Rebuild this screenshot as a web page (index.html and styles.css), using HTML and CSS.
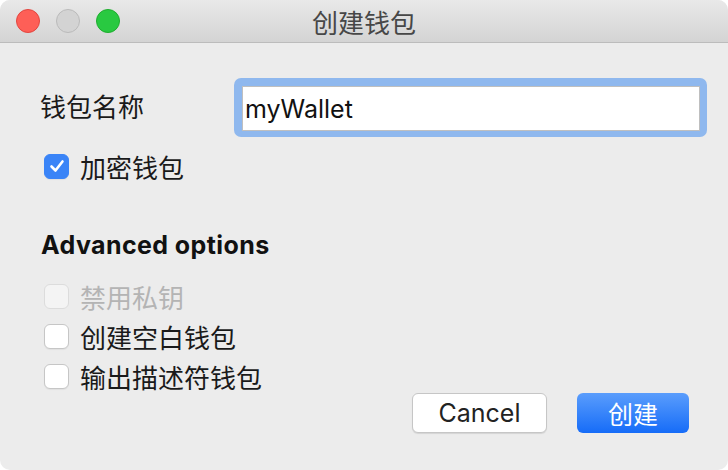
FILE: index.html
```html
<!DOCTYPE html>
<html lang="zh-CN">
<head>
  <meta charset="UTF-8">
  <title>创建钱包</title>
  <link rel="stylesheet" href="styles.css">
</head>
<body>
  <div class="window">
    <div class="titlebar">
      <div class="lights">
        <span class="light close"></span>
        <span class="light minimize"></span>
        <span class="light zoom"></span>
      </div>
      <div class="title">创建钱包</div>
      <div></div>
    </div>

    <div class="content">
      <div class="name-row">
        <label class="name-label" for="walletName">钱包名称</label>
        <div class="focus-ring">
          <input id="walletName" class="name-input" type="text" value="myWallet">
        </div>
      </div>

      <label class="check-row encrypt">
        <span class="box checked">
          <svg width="18" height="18" viewBox="0 0 18 18"><path d="M3.5 9.5 L7.5 13.5 L14.5 4.5" fill="none" stroke="#fff" stroke-width="2.6" stroke-linecap="round" stroke-linejoin="round"/></svg>
        </span>
        加密钱包
      </label>

      <h2 class="section">Advanced options</h2>

      <div class="options">
        <label class="check-row disabled"><span class="box"></span>禁用私钥</label>
        <label class="check-row"><span class="box"></span>创建空白钱包</label>
        <label class="check-row"><span class="box"></span>输出描述符钱包</label>
      </div>

      <div class="buttons">
        <button class="btn cancel">Cancel</button>
        <button class="btn primary">创建</button>
      </div>
    </div>
  </div>
</body>
</html>
```

FILE: styles.css
```css
html, body {
  margin: 0;
  background: #fff;
}
body {
  font-family: Inter, "Noto Sans CJK SC", sans-serif;
  color: #1a1a1a;
}
.window {
  width: 728px;
  height: 470px;
  border-radius: 10px;
  overflow: hidden;
  background: #ececec;
}
.titlebar {
  height: 42px;
  border-bottom: 1px solid #bcbcbc;
  background: linear-gradient(#e9e9e9, #d4d4d4);
  display: grid;
  grid-template-columns: 1fr auto 1fr;
  align-items: center;
}
.lights {
  display: flex;
  gap: 16px;
  padding-left: 16px;
}
.light {
  width: 22px;
  height: 22px;
  border-radius: 50%;
  border: 1px solid transparent;
}
.close { background: #fe5f57; border-color: #e2463f; }
.minimize { background: #d3d3d3; border-color: #bababa; }
.zoom { background: #29c941; border-color: #1fad2f; }
.title {
  font-size: 26px;
  color: #474747;
  font-family: "Noto Sans CJK SC", sans-serif;
}

.content {
  padding: 35px 21px 0 40px;
}
.name-row {
  display: flex;
  align-items: center;
}
.name-label {
  width: 194px;
  font-size: 26px;
  font-family: "Noto Sans CJK SC", sans-serif;
  margin-top: -4px;
}
.focus-ring {
  flex: 1;
  padding: 8px 7px 6px 8px;
  background: #8fb8ee;
  border-radius: 7px;
}
.name-input {
  display: block;
  width: 100%;
  height: 45px;
  box-sizing: border-box;
  border: 1px solid #bfbfbf;
  background: #fff;
  padding: 0 2px;
  font-family: Inter, sans-serif;
  font-size: 25px;
  color: #111;
  outline: none;
}

.check-row {
  display: flex;
  align-items: center;
  height: 28px;
  gap: 11px;
  padding-left: 4px;
  font-size: 26px;
  font-family: "Noto Sans CJK SC", sans-serif;
}
.encrypt {
  margin-top: 15px;
}
.box {
  width: 25px;
  height: 25px;
  box-sizing: border-box;
  border-radius: 6px;
  border: 1px solid #c6c6c6;
  background: #fff;
  box-shadow: 0 1px 1px rgba(0,0,0,0.05);
  display: flex;
  align-items: center;
  justify-content: center;
}
.box.checked {
  background: #3a84f7;
  border-color: #3a84f7;
}
.disabled {
  color: #b4b4b4;
}
.disabled .box {
  background: #f4f4f4;
  border-color: #dcdcdc;
  box-shadow: none;
}

.section {
  margin: 48px 0 0 1px;
  height: 34px;
  line-height: 34px;
  font-size: 25px;
  font-weight: bold;
  letter-spacing: 0.4px;
  color: #111;
}
.options {
  margin-top: 20px;
  display: flex;
  flex-direction: column;
  gap: 12px;
}

.buttons {
  display: flex;
  justify-content: flex-end;
  gap: 30px;
  margin-top: 3px;
  padding-right: 18px;
}
.btn {
  height: 40px;
  border-radius: 6px;
  font-size: 25px;
  font-family: Inter, "Noto Sans CJK SC", sans-serif;
  padding: 0;
}
.cancel {
  width: 135px;
  background: #fff;
  border: 1px solid #c6c6c6;
  box-shadow: 0 1px 1px rgba(0,0,0,0.1);
  color: #222;
}
.primary {
  width: 112px;
  border: none;
  background: linear-gradient(#5a9dfc, #166cf8);
  color: #fff;
}
```
